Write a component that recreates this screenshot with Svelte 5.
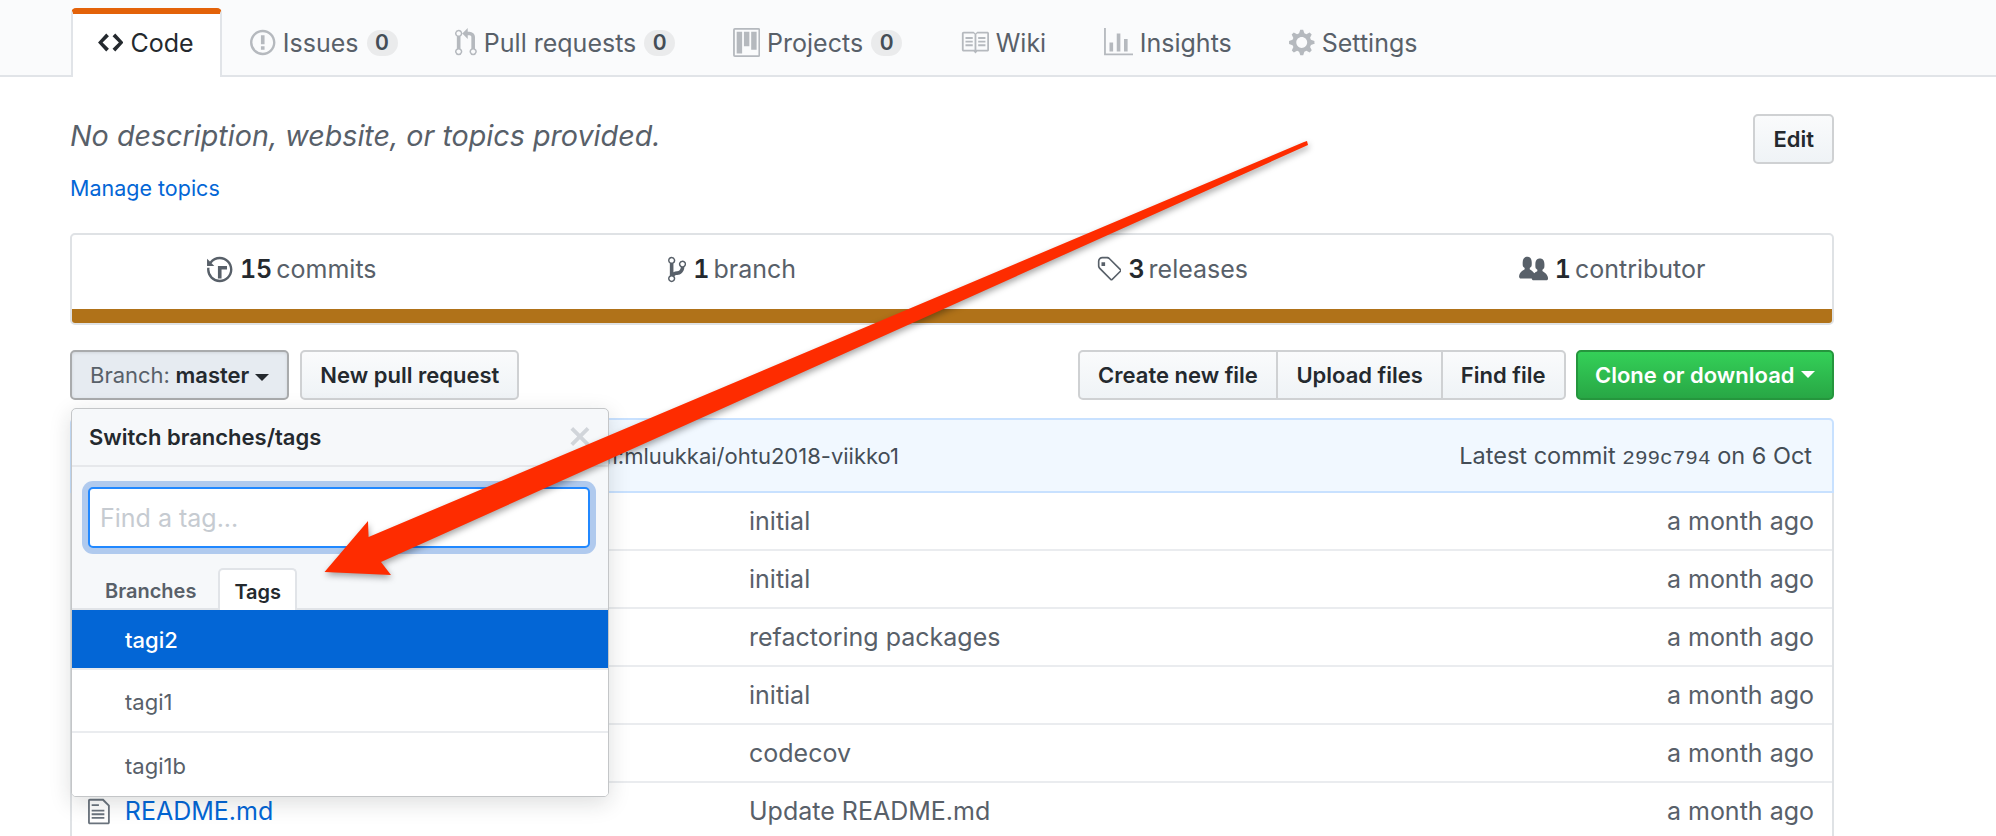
<script>
	const icons = {
		code: { w: 14, d: 'M9.5 3L8 4.5 11.5 8 8 11.5 9.5 13 14 8 9.5 3zm-5 0L0 8l4.5 5L6 11.5 2.5 8 6 4.5 4.5 3z' },
		issue: { w: 14, d: 'M7 2.3c3.14 0 5.7 2.56 5.7 5.7s-2.56 5.7-5.7 5.7A5.71 5.71 0 0 1 1.3 8c0-3.14 2.56-5.7 5.7-5.7zM7 1C3.14 1 0 4.14 0 8s3.14 7 7 7 7-3.14 7-7-3.14-7-7-7zm1 3H6v5h2V4zm0 6H6v2h2v-2z' },
		pull: { w: 12, d: 'M11 11.28V5c-.03-.78-.34-1.47-.94-2.06C9.46 2.35 8.78 2.03 8 2H7V0L4 3l3 3V4h1c.27.02.48.11.69.31.21.2.3.42.31.69v6.28A1.993 1.993 0 0 0 10 15a1.993 1.993 0 0 0 1-3.72zm-1 2.92c-.66 0-1.2-.55-1.2-1.2 0-.65.55-1.2 1.2-1.2.65 0 1.2.55 1.2 1.2 0 .65-.55 1.2-1.2 1.2zM4 3c0-1.11-.89-2-2-2a1.993 1.993 0 0 0-1 3.72v6.56A1.993 1.993 0 0 0 2 15a1.993 1.993 0 0 0 1-3.72V4.72c.59-.34 1-.98 1-1.72zm-.8 10c0 .66-.55 1.2-1.2 1.2-.65 0-1.2-.55-1.2-1.2 0-.65.55-1.2 1.2-1.2.65 0 1.2.55 1.2 1.2zM2 4.2C1.34 4.2.8 3.65.8 3c0-.65.55-1.2 1.2-1.2.65 0 1.2.55 1.2 1.2 0 .65-.55 1.2-1.2 1.2z' },
		project: { w: 15, d: 'M10 12h3V2h-3v10zm-4-2h3V2H6v8zm-4 4h3V2H2v12zm-1 1h13V1H1v14zM14 0H1a1 1 0 0 0-1 1v14a1 1 0 0 0 1 1h13a1 1 0 0 0 1-1V1a1 1 0 0 0-1-1z' },
		book: { w: 16, d: 'M3 5h4v1H3V5zm0 3h4V7H3v1zm0 2h4V9H3v1zm11-5h-4v1h4V5zm0 2h-4v1h4V7zm0 2h-4v1h4V9zm2-6v9c0 .55-.45 1-1 1H9.5l-1 1-1-1H2c-.55 0-1-.45-1-1V3c0-.55.45-1 1-1h5.5l1 1 1-1H15c.55 0 1 .45 1 1zm-8 .5L7.5 3H2v9h6V3.5zm7-.5H9.5l-.5.5V12h6V3z' },
		graph: { w: 16, d: 'M16 14v1H0V0h1v14h15zM5 13H3V8h2v5zm4 0H7V3h2v10zm4 0h-2V6h2v7z' },
		gear: { w: 14, d: 'M14 8.77v-1.6l-1.94-.64-.45-1.09.88-1.84-1.13-1.13-1.81.91-1.09-.45-.69-1.92h-1.6l-.63 1.94-1.11.45-1.84-.88-1.13 1.13.91 1.81-.45 1.09L0 7.23v1.59l1.94.64.45 1.09-.88 1.84 1.13 1.13 1.81-.91 1.09.45.69 1.92h1.59l.63-1.94 1.11-.45 1.84.88 1.13-1.13-.92-1.81.47-1.09L14 8.75v.02zM7 11c-1.66 0-3-1.34-3-3s1.34-3 3-3 3 1.34 3 3-1.34 3-3 3z' },
		history: { w: 14, d: 'M8 13H6V6h5v2H8v5zM7 1C4.81 1 2.87 2.02 1.59 3.59L0 2v4h4L2.5 4.5C3.55 3.17 5.17 2.3 7 2.3c3.14 0 5.7 2.56 5.7 5.7s-2.56 5.7-5.7 5.7A5.71 5.71 0 0 1 1.3 8c0-.34.03-.67.09-1H.08C.03 7.33 0 7.66 0 8c0 3.86 3.14 7 7 7s7-3.14 7-7-3.14-7-7-7z' },
		branch: { w: 10, d: 'M10 5c0-1.11-.89-2-2-2a1.993 1.993 0 0 0-1 3.72v.3c-.02.52-.23.98-.63 1.38-.4.4-.86.61-1.38.63-.83.02-1.48.16-2 .45V4.72a1.993 1.993 0 0 0-1-3.72C.88 1 0 1.89 0 3a2 2 0 0 0 1 1.72v6.56c-.59.35-1 .99-1 1.72 0 1.11.89 2 2 2 1.11 0 2-.89 2-2 0-.53-.2-1-.53-1.36.09-.06.48-.41.59-.47.25-.11.56-.17.94-.17 1.05-.05 1.95-.45 2.75-1.25S8.95 7.77 9 6.73h-.02C9.59 6.37 10 5.73 10 5zM2 1.8c.66 0 1.2.55 1.2 1.2 0 .65-.55 1.2-1.2 1.2C1.35 4.2.8 3.65.8 3c0-.65.55-1.2 1.2-1.2zm0 12.41c-.66 0-1.2-.55-1.2-1.2 0-.65.55-1.2 1.2-1.2.65 0 1.2.55 1.2 1.2 0 .65-.55 1.2-1.2 1.2zm6-8c-.66 0-1.2-.55-1.2-1.2 0-.65.55-1.2 1.2-1.2.65 0 1.2.55 1.2 1.2 0 .65-.55 1.2-1.2 1.2z' },
		tag: { w: 14, d: 'M7.73 1.73C7.26 1.26 6.62 1 5.96 1H3.5C2.13 1 1 2.13 1 3.5v2.47c0 .66.27 1.3.73 1.77l6.06 6.06c.39.39 1.02.39 1.41 0l4.59-4.59a.996.996 0 0 0 0-1.41L7.73 1.73zM2.38 7.09c-.31-.3-.47-.7-.47-1.13V3.5c0-.88.72-1.59 1.59-1.59h2.47c.42 0 .83.16 1.13.47l6.14 6.13-4.73 4.73-6.13-6.15zM3 4h2v2H3V4z' },
		people: { w: 16, d: 'M16 12.999c0 .439-.45 1-1 1H7.995c-.539 0-.994-.447-.995-.999H1c-.54 0-1-.561-1-1 0-2.634 3-4 3-4s.229-.409 0-1c-.841-.621-1.058-.59-1-3 .058-2.419 1.367-3 2.5-3s2.442.58 2.5 3c.058 2.41-.159 2.379-1 3-.229.59 0 1 0 1s1.549.711 2.42 2.088C9.196 9.369 10 8.999 10 8.999s.229-.409 0-1c-.841-.62-1.058-.59-1-3 .058-2.419 1.367-3 2.5-3s2.437.581 2.495 3c.059 2.41-.158 2.38-1 3-.229.59 0 1 0 1s3.005 1.366 3.005 4z' },
		file: { w: 12, d: 'M6 5H2V4h4v1zM2 8h7V7H2v1zm0 2h7V9H2v1zm0 2h7v-1H2v1zm10-7.5V14c0 .55-.45 1-1 1H1c-.55 0-1-.45-1-1V2c0-.55.45-1 1-1h7.5L12 4.5zM11 5L8 2H1v12h10V5z' },
		close: { w: 12, d: 'M7.48 8l3.75 3.75-1.48 1.48L6 9.48l-3.75 3.75-1.48-1.48L4.52 8 .77 4.25l1.48-1.48L6 6.52l3.75-3.75 1.48 1.48L7.48 8z' },
	}

	const tabs = [
		{ name: 'Code', icon: 'code', active: true },
		{ name: 'Issues', icon: 'issue', count: 0 },
		{ name: 'Pull requests', icon: 'pull', count: 0 },
		{ name: 'Projects', icon: 'project', count: 0 },
		{ name: 'Wiki', icon: 'book' },
		{ name: 'Insights', icon: 'graph' },
		{ name: 'Settings', icon: 'gear' },
	]

	const stats = [
		{ icon: 'history', count: 15, label: 'commits' },
		{ icon: 'branch', count: 1, label: 'branch' },
		{ icon: 'tag', count: 3, label: 'releases' },
		{ icon: 'people', count: 1, label: 'contributor' },
	]

	const files = [
		{ message: 'initial' },
		{ message: 'initial' },
		{ message: 'refactoring packages' },
		{ message: 'initial' },
		{ message: 'codecov' },
		{ name: 'README.md', message: 'Update README.md' },
	]

	const tags = ['tagi2', 'tagi1', 'tagi1b']
</script>

{#snippet icon(name, cls = '')}
	<svg class="icon {cls}" viewBox="0 0 {icons[name].w} 16" width={icons[name].w * 1.82} height="29" aria-hidden="true">
		<path fill="currentColor" fill-rule="evenodd" d={icons[name].d} />
	</svg>
{/snippet}

<div class="page">
	<nav>
		{#each tabs as tab}
			<a class="tab" class:active={tab.active} href="#{tab.name}">
				{@render icon(tab.icon)}
				<span>{tab.name}</span>
				{#if tab.count !== undefined}
					<span class="badge">{tab.count}</span>
				{/if}
			</a>
		{/each}
	</nav>

	<main>
		<div class="description">
			<em>No description, website, or topics provided.</em>
			<button class="btn edit">Edit</button>
		</div>

		<a class="topics" href="#topics">Manage topics</a>

		<div class="summary">
			<ul>
				{#each stats as stat}
					<li>
						{@render icon(stat.icon)}
						<span><b>{stat.count}</b> {stat.label}</span>
					</li>
				{/each}
			</ul>
			<div class="lang-bar"></div>
		</div>

		<div class="toolbar">
			<div class="branch-select">
				<button class="btn selected">
					<span class="muted">Branch:</span> master<i class="caret"></i>
				</button>

				<div class="popup">
					<header>
						<span>Switch branches/tags</span>
						{@render icon('close', 'close')}
					</header>
					<div class="filter">
						<input type="text" placeholder="Find a tag..." />
					</div>
					<div class="popup-tabs">
						<span>Branches</span>
						<span class="current">Tags</span>
					</div>
					<ul>
						{#each tags as tag, i}
							<li class:highlighted={i === 0}>{tag}</li>
						{/each}
					</ul>
				</div>
			</div>

			<button class="btn">New pull request</button>

			<div class="group">
				<button class="btn">Create new file</button>
				<button class="btn">Upload files</button>
				<button class="btn">Find file</button>
			</div>

			<button class="btn primary">Clone or download<i class="caret up"></i></button>
		</div>

		<div class="tease">
			<span class="tease-message">Merge branch 'master' of github.com:mluukkai/ohtu2018-viikko1</span>
			<span class="latest">Latest commit <span class="sha">299c794</span> on 6 Oct</span>
		</div>

		<div class="files">
			{#each files as file}
				<div class="row">
					<div class="name">
						{#if file.name}
							{@render icon('file')}
							<a href="#file">{file.name}</a>
						{/if}
					</div>
					<div class="message">{file.message}</div>
					<div class="age">a month ago</div>
				</div>
			{/each}
		</div>
	</main>

	<svg class="arrow" viewBox="0 0 1996 836" width="1996" height="836" aria-hidden="true">
		<polygon points="1304,142 1307,141 1308,145 381,562 391,575 324.5,572 368,521 368.6,537" />
	</svg>
</div>

<style>
	:global(body) {
		margin: 0;
		background: #fff;
	}

	.page {
		position: relative;
		height: 836px;
		overflow: hidden;
		font-family: Inter, "Liberation Sans", sans-serif;
		font-size: 25px;
		color: #24292e;
	}

	a {
		text-decoration: none;
	}

	.icon {
		display: block;
		flex: none;
	}

	nav {
		display: flex;
		height: 75px;
		padding-left: 71px;
		background: #fafbfc;
		border-bottom: 2px solid #e1e4e8;
	}

	.tab {
		display: flex;
		align-items: center;
		gap: 7px;
		height: 69px;
		box-sizing: border-box;
		margin-top: 8px;
		padding: 0 28.75px 6px;
		color: #586069;
		border-top: 6px solid transparent;
		border-radius: 5px 5px 0 0;

		& .icon {
			color: #b5b9be;
		}

		&.active {
			padding: 0 26px 6px 25px;
			color: #24292e;
			background: #fff;
			border: 2px solid #e1e4e8;
			border-top: 6px solid #e36209;
			border-bottom: 0;

			& .icon {
				color: #24292e;
			}
		}
	}

	.badge {
		width: 31px;
		height: 26px;
		margin-left: 1px;
		border-radius: 13px;
		background: #eaebec;
		color: #444d56;
		font-size: 21px;
		font-weight: 600;
		line-height: 26px;
		text-align: center;
	}

	main {
		width: 1764px;
		margin-left: 70px;
	}

	.description {
		display: flex;
		align-items: center;
		justify-content: space-between;
		height: 50px;
		margin-top: 37px;

		& em {
			padding-bottom: 7px;
			color: #586069;
			font-size: 28.7px;
		}
	}

	.btn {
		height: 50px;
		box-sizing: border-box;
		padding: 0 18px;
		border: 2px solid #cfd1d3;
		border-radius: 5px;
		background: linear-gradient(#fafbfc, #eff3f6);
		color: #24292e;
		font: 600 22px Inter, "Liberation Sans", sans-serif;
		white-space: nowrap;
	}

	.topics {
		display: block;
		margin-top: 11px;
		color: #0366d6;
		font-size: 21.5px;
		line-height: 26px;
	}

	.summary {
		height: 92px;
		box-sizing: border-box;
		margin-top: 32px;
		border: 2px solid #dfe2e5;
		border-radius: 5px;
		overflow: hidden;

		& ul {
			display: grid;
			grid-template-columns: repeat(4, 1fr);
			height: 74px;
			margin: 0;
			padding: 0;
			list-style: none;
		}

		& li {
			display: flex;
			align-items: center;
			justify-content: center;
			gap: 7px;
			padding-bottom: 6px;
			color: #586069;
		}

		& b {
			margin-right: -3px;
			color: #24292e;
			font-weight: 600;
			font-feature-settings: "tnum";
		}
	}

	.lang-bar {
		height: 14px;
		background: #b07219;
	}

	.toolbar {
		display: flex;
		gap: 11px;
		margin-top: 25px;

		& .group {
			display: flex;
			margin-left: auto;

			& .btn {
				border-radius: 0;
				margin-left: -2px;
			}

			& .btn:first-child {
				margin-left: 0;
				padding: 0 18.5px;
				border-radius: 5px 0 0 5px;
			}

			& .btn:last-child {
				border-radius: 0 5px 5px 0;
			}
		}
	}

	.branch-select {
		position: relative;
	}

	.selected {
		background: #e6ebf1;
		border-color: #a9abad;
		box-shadow: inset 0 1px 3px rgba(27, 31, 35, 0.1);

		& .muted {
			color: #586069;
			font-weight: 400;
		}
	}

	.caret {
		display: inline-block;
		margin-left: 6px;
		border: 7px solid transparent;
		border-top-color: currentColor;
		border-bottom: 0;
		vertical-align: middle;

		&.up {
			vertical-align: 5px;
		}
	}

	.primary {
		margin-left: -1px;
		padding: 0 17.5px;
		color: #fff;
		background: linear-gradient(#34d058, #28a745);
		border-color: #25963d;
	}

	.popup {
		position: absolute;
		top: 58px;
		left: 1px;
		z-index: 2;
		width: 538px;
		height: 389px;
		box-sizing: border-box;
		background: #f6f8fa;
		border: 1px solid #c4c6c8;
		border-radius: 5px;
		box-shadow: 0 6px 22px rgba(27, 31, 35, 0.15);
		overflow: hidden;

		& header {
			display: flex;
			align-items: center;
			justify-content: space-between;
			height: 58px;
			box-sizing: border-box;
			padding: 0 17px 1px;
			border-bottom: 2px solid #e6e8eb;
			font-size: 22px;
			font-weight: 600;
			color: #24292e;
		}

		& .close {
			color: #d1d5da;
		}

		& .filter {
			padding: 20px 18px 0 16px;
		}

		& input {
			display: block;
			width: 100%;
			height: 61px;
			box-sizing: border-box;
			padding: 0 10px;
			border: 2px solid #2188ff;
			border-radius: 5px;
			box-shadow: 0 0 0 6px #b0caee;
			outline: none;
			background: #fff;
			font: 25px Inter, "Liberation Sans", sans-serif;

			&::placeholder {
				color: #c6cbd1;
			}
		}

		& .popup-tabs {
			display: flex;
			align-items: flex-end;
			height: 62px;
			padding-left: 17px;
			box-sizing: border-box;
			border-bottom: 2px solid #e1e4e8;
			font-size: 20px;
			font-weight: 600;
			color: #586069;

			& span {
				display: flex;
				align-items: center;
				height: 42px;
				box-sizing: border-box;
				padding: 3px 16px 0;
				margin-bottom: -2px;
			}

			& .current {
				margin-left: 6px;
				padding: 3px 14px 0;
				background: #fff;
				color: #24292e;
				border: 2px solid #e1e4e8;
				border-bottom: 0;
				border-radius: 5px 5px 0 0;
			}
		}

		& ul {
			margin: 0;
			padding: 0;
			list-style: none;
			background: #fff;
		}

		& li {
			display: flex;
			align-items: center;
			height: 63px;
			box-sizing: border-box;
			padding: 2px 0 0 53px;
			border-bottom: 2px solid #eaecef;
			font-size: 22px;
			color: #586069;

			&:last-child {
				border-bottom: 0;
			}
		}

		& .highlighted {
			height: 60px;
			background: #0366d6;
			color: #fff;
			font-weight: 500;
		}
	}

	.tease {
		display: flex;
		align-items: center;
		justify-content: space-between;
		height: 75px;
		box-sizing: border-box;
		margin-top: 18px;
		padding: 0 20px 0 0;
		background: #f1f8ff;
		border: 2px solid #c8e1ff;
		border-radius: 5px 5px 0 0;
		color: #444d56;
		font-size: 22px;
	}

	.tease-message {
		width: 827px;
		text-align: right;
		white-space: nowrap;
	}

	.latest {
		font-size: 23.5px;
	}

	.sha {
		font-family: "Liberation Mono", monospace;
		font-size: 21px;
	}

	.files {
		border-left: 2px solid #dfe2e5;
		border-right: 2px solid #dfe2e5;
	}

	.row {
		display: grid;
		grid-template-columns: 677px 1fr auto;
		align-items: center;
		height: 58px;
		padding-right: 18px;
		border-bottom: 2px solid #eaecef;
		box-sizing: border-box;
		color: #586069;

		& .name {
			display: flex;
			align-items: center;
			gap: 15px;
			padding-left: 16px;
		}

		& a {
			color: #0366d6;
		}

		& .icon {
			color: #6a737d;
		}
	}

	.arrow {
		position: absolute;
		top: 0;
		left: 0;
		z-index: 3;
		pointer-events: none;
		filter: drop-shadow(1px 3px 3px rgba(0, 0, 0, 0.35));

		& polygon {
			fill: #fe2c00;
		}
	}
</style>
